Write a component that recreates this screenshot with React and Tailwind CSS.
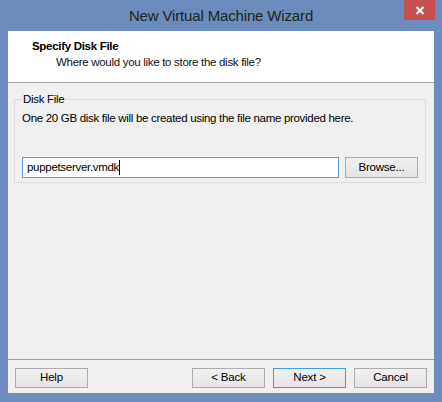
import React from 'react';

const font = { fontFamily: '"Liberation Sans", Arial, sans-serif' };

// Plain Windows 8 style push button
const WinButton = ({ children, primary = false, className = '' }) => (
  <button
    type="button"
    className={`w-[73px] h-[20px] flex items-center justify-center text-[11.5px] tracking-[-0.2px] text-black bg-gradient-to-b from-[#f0f0f0] to-[#e5e5e5] border ${
      primary ? 'border-[#3c9ef0]' : 'border-[#acacac]'
    } ${className}`}
  >
    {children}
  </button>
);

export default function App() {
  return (
    <div className="w-[442px] h-[402px] bg-[#6b8cbd] flex flex-col" style={font}>
      {/* Title bar */}
      <div className="relative h-[31px] shrink-0 flex items-center justify-center">
        <span className="text-[15px] tracking-[-0.15px] text-[#222] leading-none">New Virtual Machine Wizard</span>
        <div className="absolute top-0 right-[7px] w-[31px] h-[20px] bg-[#c75050] flex items-center justify-center">
          <svg width="10" height="9" viewBox="0 0 10 9">
            <path d="M1.5 1 L8.5 8 M8.5 1 L1.5 8" stroke="#fff" strokeWidth="2" />
          </svg>
        </div>
      </div>

      {/* Client area */}
      <div className="flex-1 mx-[8px] mb-[9px] bg-[#f0f0f0] flex flex-col text-[11.5px] tracking-[-0.3px]">
        {/* Page header */}
        <div className="h-[52px] shrink-0 bg-white border-b border-[#a0a0a0] pl-[24px] pt-[7px]">
          <div className="font-bold text-black leading-[16px]">Specify Disk File</div>
          <div className="text-[#111] leading-[16px] pl-[24px]">
            Where would you like to store the disk file?
          </div>
        </div>

        {/* Body */}
        <div className="flex-1 pt-[8px]">
          <fieldset className="ml-[6px] mr-[8px] h-[92px] border border-[#dcdcdc] px-[7px] pb-[4px]">
            <legend className="px-[1px] leading-[16px] text-black">Disk File</legend>
            <div className="leading-[16px] text-black mt-[3px]">
              One 20 GB disk file will be created using the file name provided here.
            </div>
            <div className="flex gap-[6px] mt-[31px]">
              <div className="w-[317px] h-[21px] bg-white border border-[#569de5] flex items-center pl-[4px] text-black">
                <span>puppetserver.vmdk</span>
                <span className="w-px h-[15px] bg-black" />
              </div>
              <WinButton className="h-[21px]">Browse...</WinButton>
            </div>
          </fieldset>
        </div>

        {/* Footer buttons */}
        <div className="h-[34px] shrink-0 border-t border-[#a0a0a0] pt-[8px] px-[7px] flex">
          <WinButton>Help</WinButton>
          <div className="flex-1" />
          <div className="flex gap-[8px]">
            <WinButton>&lt; Back</WinButton>
            <WinButton primary>Next &gt;</WinButton>
            <WinButton>Cancel</WinButton>
          </div>
        </div>
      </div>
    </div>
  );
}
